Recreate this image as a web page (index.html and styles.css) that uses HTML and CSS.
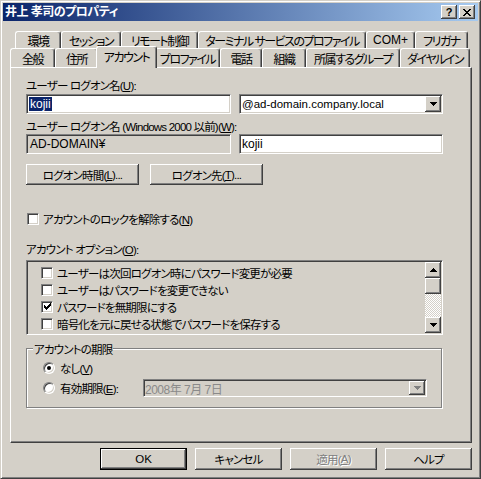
FILE: index.html
```html
<!DOCTYPE html>
<html lang="ja">
<head>
    <meta charset="UTF-8">
    <meta name="viewport" content="width=device-width, initial-scale=1.0">
    <title>井上 孝司のプロパティ</title>
    <link rel="stylesheet" href="styles.css">
</head>
<body>
    <div class="window">
        <!-- Barre de titre -->
        <div class="titlebar">
            <span class="title">井上 孝司のプロパティ</span>
            <div class="caption-buttons">
                <span class="cap-btn help">?</span>
                <span class="cap-btn">
                    <svg width="8" height="7" viewBox="0 0 8 7"><path d="M0 0h2v1h-2zM6 0h2v1h-2zM1 1h2v1h-2zM5 1h2v1h-2zM2 2h4v1h-4zM3 3h2v1h-2zM2 4h4v1h-4zM1 5h2v1h-2zM5 5h2v1h-2zM0 6h2v1h-2zM6 6h2v1h-2z" fill="#000"/></svg>
                </span>
            </div>
        </div>

        <div class="content">
            <!-- Onglets sur deux rangées -->
            <div class="tabs">
                <div class="tab-row back">
                    <div class="tab">環境</div>
                    <div class="tab">セッション</div>
                    <div class="tab">リモート制御</div>
                    <div class="tab">ターミナル サービスのプロファイル</div>
                    <div class="tab latin">COM+</div>
                    <div class="tab">フリガナ</div>
                </div>
                <div class="tab-row front">
                    <div class="tab">全般</div>
                    <div class="tab">住所</div>
                    <div class="tab active">アカウント</div>
                    <div class="tab">プロファイル</div>
                    <div class="tab">電話</div>
                    <div class="tab">組織</div>
                    <div class="tab">所属するグループ</div>
                    <div class="tab">ダイヤルイン</div>
                </div>
            </div>

            <div class="panel">
                <div class="label l-logon">ユーザー ログオン名(<u>U</u>):</div>
                <div class="field-row r-logon">
                    <div class="edit"><span class="selected">kojii</span></div>
                    <div class="edit combo">
                        <span class="combo-text">@ad-domain.company.local</span>
                        <span class="drop-btn">
                            <svg width="7" height="4" viewBox="0 0 7 4"><path d="M0 0h7v1H0zM1 1h5v1H1zM2 2h3v1H2zM3 3h1v1H3z" fill="#000"/></svg>
                        </span>
                    </div>
                </div>

                <div class="label l-legacy">ユーザー ログオン名 (Windows 2000 以前)(<u>W</u>):</div>
                <div class="field-row">
                    <div class="edit disabled">AD-DOMAIN¥</div>
                    <div class="edit wide">kojii</div>
                </div>

                <div class="button-row">
                    <div class="button">ログオン時間(<u>L</u>)...</div>
                    <div class="button">ログオン先(<u>T</u>)...</div>
                </div>

                <div class="check-row unlock">
                    <span class="checkbox"></span>
                    <span>アカウントのロックを解除する(<u>N</u>)</span>
                </div>

                <div class="label l-options">アカウント オプション(<u>O</u>):</div>
                <div class="listbox">
                    <div class="list-items">
                        <div class="list-item"><span class="checkbox"></span>ユーザーは次回ログオン時にパスワード変更が必要</div>
                        <div class="list-item"><span class="checkbox"></span>ユーザーはパスワードを変更できない</div>
                        <div class="list-item">
                            <span class="checkbox">
                                <svg width="7" height="7" viewBox="0 0 7 7"><path d="M6 0h1v1H6zM5 1h2v1H5zM0 2h1v1H0zM4 2h3v1H4zM0 3h2v1H0zM3 3h3v1H3zM0 4h5v1H0zM1 5h3v1H1zM2 6h1v1H2z" fill="#000"/></svg>
                            </span>パスワードを無期限にする
                        </div>
                        <div class="list-item"><span class="checkbox"></span>暗号化を元に戻せる状態でパスワードを保存する</div>
                    </div>
                    <div class="scrollbar">
                        <span class="scroll-btn">
                            <svg width="7" height="4" viewBox="0 0 7 4"><path d="M3 0h1v1H3zM2 1h3v1H2zM1 2h5v1H1zM0 3h7v1H0z" fill="#000"/></svg>
                        </span>
                        <span class="scroll-thumb"></span>
                        <span class="scroll-track"></span>
                        <span class="scroll-btn">
                            <svg width="7" height="4" viewBox="0 0 7 4"><path d="M0 0h7v1H0zM1 1h5v1H1zM2 2h3v1H2zM3 3h1v1H3z" fill="#000"/></svg>
                        </span>
                    </div>
                </div>

                <div class="groupbox">
                    <div class="legend">アカウントの期限</div>
                    <div class="radio-row">
                        <span class="radio checked"></span>
                        <span class="radio-label">なし(<u>V</u>)</span>
                    </div>
                    <div class="radio-row">
                        <span class="radio"></span>
                        <span class="radio-label expire">有効期限(<u>E</u>):</span>
                        <div class="edit datepicker">
                            <span class="date-text">2008年 7月 7日</span>
                            <span class="drop-btn">
                                <svg width="7" height="4" viewBox="0 0 7 4"><path d="M0 0h7v1H0zM1 1h5v1H1zM2 2h3v1H2zM3 3h1v1H3z" fill="#808080"/></svg>
                            </span>
                        </div>
                    </div>
                </div>
            </div>

            <!-- Boutons de la boîte de dialogue -->
            <div class="dialog-buttons">
                <div class="button default latin">OK</div>
                <div class="button">キャンセル</div>
                <div class="button disabled">適用(<u>A</u>)</div>
                <div class="button">ヘルプ</div>
            </div>
        </div>
    </div>
</body>
</html>
```

FILE: styles.css
```css
body {
    margin: 0;
    font-family: "Liberation Sans", "Noto Sans CJK JP", sans-serif;
    font-size: 11.5px;
    letter-spacing: -0.8px;
    font-feature-settings: "palt";
    color: #000;
    background: #d4d0c8;
}

/* Texte latin seul : sans resserrement */
.latin,
.edit {
    font-size: 11.5px;
    letter-spacing: 0;
}

.window {
    width: 481px;
    height: 479px;
    box-sizing: border-box;
    background: #d4d0c8;
    border: 1px solid;
    border-color: #d4d0c8 #404040 #404040 #d4d0c8;
    box-shadow: inset 1px 1px #fff, inset -1px -1px #808080;
    padding: 2px;
}

/* Barre de titre */
.titlebar {
    height: 18px;
    display: flex;
    align-items: center;
    justify-content: space-between;
    padding: 0 3px 0 2px;
    background: linear-gradient(90deg, #0a246a, #a6caf0);
}

.title {
    color: #fff;
    font-weight: bold;
    font-size: 12px;
    letter-spacing: -0.5px;
    line-height: 18px;
}

.caption-buttons {
    display: flex;
    gap: 2px;
}

.cap-btn {
    width: 16px;
    height: 14px;
    box-sizing: border-box;
    background: #d4d0c8;
    box-shadow: inset -1px -1px #404040, inset 1px 1px #fff, inset -2px -2px #808080;
    display: flex;
    align-items: center;
    justify-content: center;
}

.cap-btn.help {
    font-weight: bold;
    font-size: 11px;
    letter-spacing: 0;
    line-height: 12px;
}

.content {
    padding: 10px 6px 0 7px;
}

/* Onglets */
.tab-row {
    display: flex;
}

.tab-row.back {
    height: 17px;
    margin-left: 5px;
}

.tab-row.front {
    height: 19px;
}

.tab {
    box-sizing: border-box;
    display: flex;
    align-items: center;
    justify-content: center;
    white-space: nowrap;
    overflow: hidden;
    font-size: 12px;
    letter-spacing: -1.5px;
    border-top: 1px solid #fff;
    border-left: 1px solid #fff;
    border-right: 1px solid #404040;
    border-radius: 3px 3px 0 0;
    box-shadow: inset -1px 0 #808080;
    background: #d4d0c8;
}

.tab.latin {
    font-size: 12px;
    letter-spacing: 0;
}

.back .tab:nth-child(1) { width: 46px; }
.back .tab:nth-child(2) { width: 60px; }
.back .tab:nth-child(3) { width: 77px; }
.back .tab:nth-child(4) { width: 168px; }
.back .tab:nth-child(5) { width: 49px; }
.back .tab:nth-child(6) { width: 53px; }

.front .tab:nth-child(1) { width: 45px; }
.front .tab:nth-child(2) { width: 43px; }
.front .tab:nth-child(3) { width: 57px; }
.front .tab:nth-child(4) { width: 65px; }
.front .tab:nth-child(5) { width: 42px; }
.front .tab:nth-child(6) { width: 44px; }
.front .tab:nth-child(7) { width: 94px; }
.front .tab:nth-child(8) { width: 70px; }

.front .tab.active {
    width: 61px;
    margin: -2px -2px -1px;
    padding-bottom: 2px;
    position: relative;
    z-index: 1;
}

/* Panneau */
.panel {
    height: 376px;
    box-sizing: border-box;
    border: 1px solid;
    border-color: #fff #404040 #404040 #fff;
    box-shadow: inset -1px -1px #808080;
    padding-left: 15px;
}

.label {
    line-height: 14px;
    height: 14px;
    white-space: nowrap;
}

.l-logon { margin-top: 11px; }
.l-legacy { margin-top: 6px; }
.l-options { margin-top: 18px; }

.field-row {
    display: flex;
    gap: 8px;
}

.r-logon { margin-top: 1px; }

.edit {
    width: 205px;
    height: 20px;
    box-sizing: border-box;
    display: flex;
    align-items: center;
    padding-left: 1px;
    background: #fff;
    border: 1px solid;
    border-color: #808080 #fff #fff #808080;
    box-shadow: inset 1px 1px #404040, inset -1px -1px #d4d0c8;
    white-space: nowrap;
    overflow: hidden;
}

.edit.wide,
.edit.combo {
    width: 204px;
}

.edit.disabled {
    background: #d4d0c8;
    padding-left: 3px;
    font-size: 12px;
}

.edit.wide {
    padding-left: 2px;
    font-size: 12px;
}

.selected {
    background: #0a246a;
    color: #fff;
    font-size: 12px;
    line-height: 14px;
    padding: 0 1px;
    margin-left: 1px;
}

.combo {
    padding: 1px 1px 1px 2px;
    justify-content: space-between;
}

.drop-btn {
    width: 16px;
    height: 16px;
    box-sizing: border-box;
    flex-shrink: 0;
    display: flex;
    align-items: center;
    justify-content: center;
    background: #d4d0c8;
    box-shadow: inset -1px -1px #404040, inset 1px 1px #fff, inset -2px -2px #808080;
}

/* Boutons */
.button-row {
    display: flex;
    gap: 11px;
    margin-top: 10px;
}

.button {
    width: 113px;
    height: 21px;
    box-sizing: border-box;
    display: flex;
    align-items: center;
    justify-content: center;
    white-space: nowrap;
    background: #d4d0c8;
    box-shadow: inset -1px -1px #404040, inset 1px 1px #fff, inset -2px -2px #808080;
}

/* Cases à cocher */
.check-row {
    display: flex;
    align-items: center;
    gap: 4px;
    height: 13px;
}

.unlock {
    margin-top: 27px;
    padding-left: 1px;
}

.checkbox {
    width: 12px;
    height: 12px;
    box-sizing: border-box;
    flex-shrink: 0;
    display: flex;
    align-items: center;
    justify-content: center;
    background: #fff;
    border: 1px solid;
    border-color: #808080 #fff #fff #808080;
    box-shadow: inset 1px 1px #404040, inset -1px -1px #d4d0c8;
}

/* Liste des options */
.listbox {
    width: 417px;
    height: 75px;
    box-sizing: border-box;
    margin-top: 3px;
    display: flex;
    border: 1px solid;
    border-color: #808080 #fff #fff #808080;
    box-shadow: inset 1px 1px #404040, inset -1px -1px #d4d0c8;
    padding: 1px;
}

.list-items {
    flex: 1;
    padding-top: 2px;
}

.list-item {
    height: 17px;
    display: flex;
    align-items: center;
    gap: 4px;
    padding-left: 13px;
    white-space: nowrap;
}

.scrollbar {
    width: 16px;
    display: flex;
    flex-direction: column;
}

.scroll-btn,
.scroll-thumb {
    height: 16px;
    box-sizing: border-box;
    display: flex;
    align-items: center;
    justify-content: center;
    background: #d4d0c8;
    box-shadow: inset -1px -1px #404040, inset 1px 1px #fff, inset -2px -2px #808080;
}

.scroll-track {
    flex: 1;
    background-color: #fff;
    background-image: repeating-conic-gradient(#d4d0c8 0 25%, #fff 0 50%);
    background-size: 2px 2px;
}

/* Cadre d'expiration */
.groupbox {
    position: relative;
    width: 416px;
    height: 60px;
    box-sizing: border-box;
    margin-top: 13px;
    padding: 9px 0 0 16px;
    border: 1px solid #808080;
    box-shadow: inset 1px 1px #fff, 1px 1px #fff;
}

.legend {
    position: absolute;
    top: -6px;
    left: 6px;
    line-height: 14px;
    padding: 0 1px;
    background: #d4d0c8;
}

.radio-row {
    height: 20px;
    display: flex;
    align-items: center;
}

.radio {
    width: 12px;
    height: 12px;
    box-sizing: border-box;
    border-radius: 50%;
    flex-shrink: 0;
    display: flex;
    align-items: center;
    justify-content: center;
    background: #fff;
    border: 1px solid;
    border-color: #808080 #fff #fff #808080;
    box-shadow: inset 1px 1px #404040, inset -1px -1px #d4d0c8;
}

.radio.checked::after {
    content: "";
    width: 4px;
    height: 4px;
    border-radius: 50%;
    background: #000;
}

.radio-label {
    margin-left: 5px;
    white-space: nowrap;
}

.radio-label.expire {
    width: 83px;
}

.edit.datepicker {
    width: 284px;
    height: 18px;
    background: #d4d0c8;
    padding: 1px;
    justify-content: space-between;
    font-size: 12px;
    letter-spacing: -0.5px;
    color: #8a8a8a;
}

.datepicker .drop-btn {
    height: 14px;
}

/* Boutons du bas */
.dialog-buttons {
    display: flex;
    justify-content: flex-end;
    gap: 8px;
    margin-top: 5px;
}

.dialog-buttons .button {
    width: 87px;
    height: 22px;
}

.button.default {
    border: 1px solid #000;
}

.button.disabled {
    color: #808080;
    text-shadow: 1px 1px #fff;
}
```
